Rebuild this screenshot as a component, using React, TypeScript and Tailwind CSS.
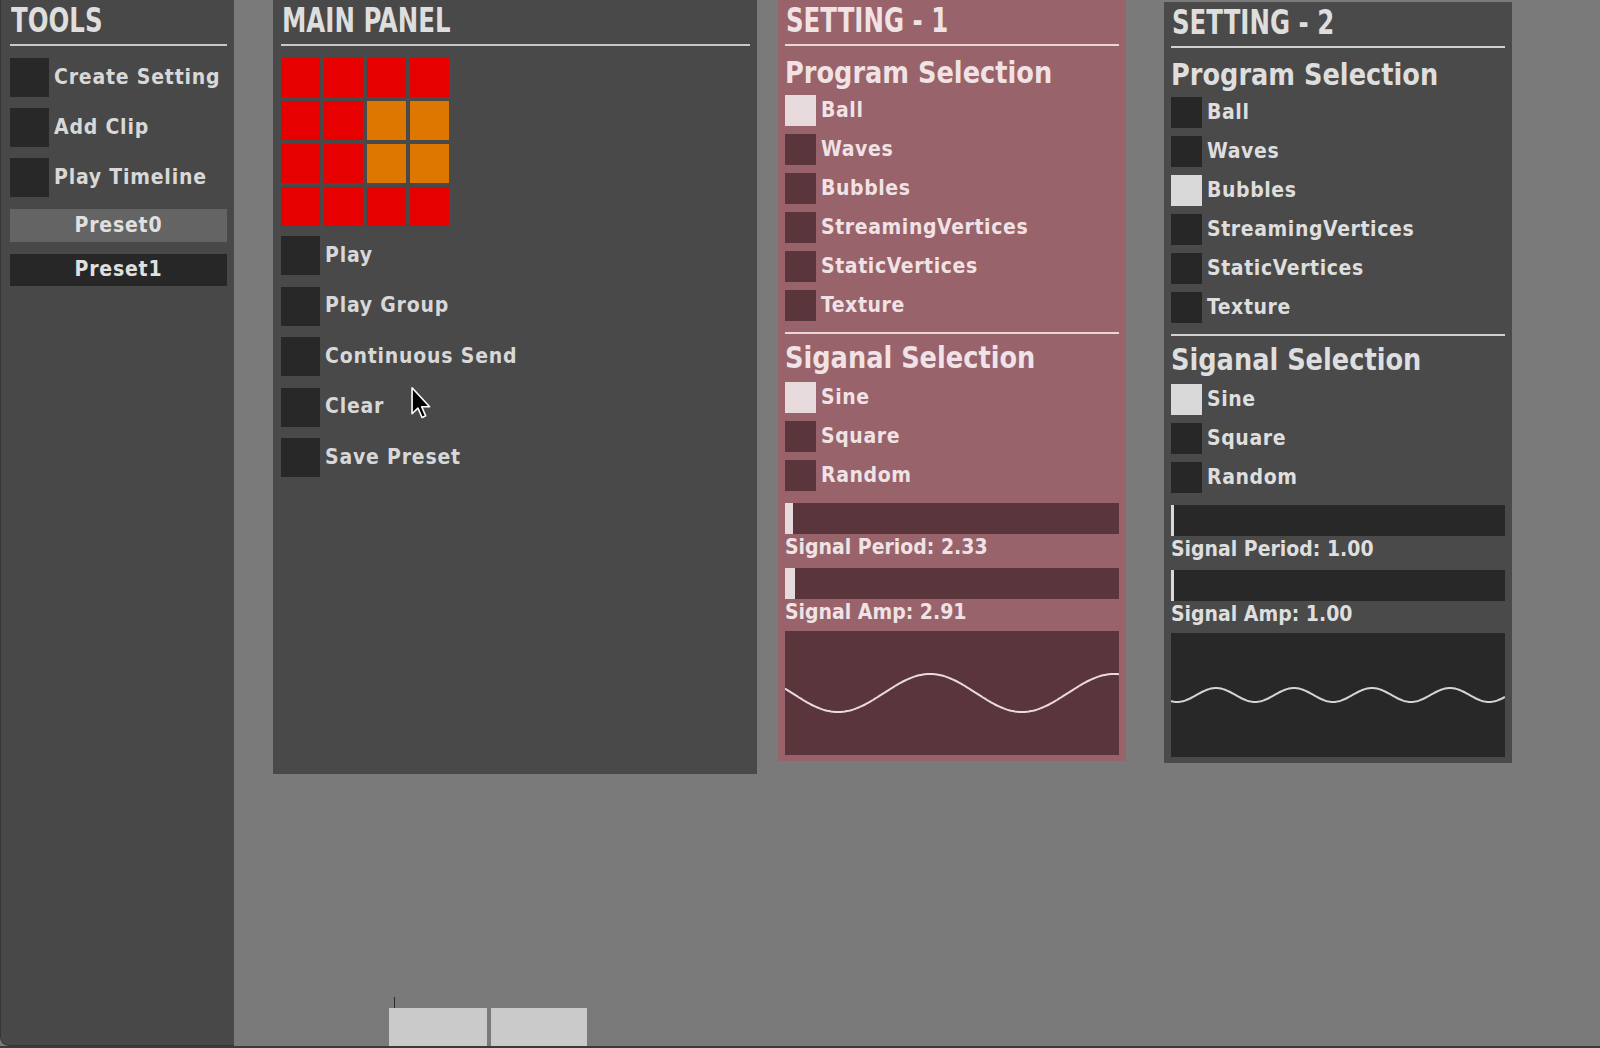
import React from "react";

const FONT =
  "font-['DejaVu_Sans_Condensed','DejaVu_Sans',sans-serif] [font-stretch:condensed] font-bold";

type Theme = {
  panel: string;
  off: string;
  on: string;
  text: string;
  line: string;
  track: string;
  handle: string;
  stroke: string;
};

const ROSE: Theme = {
  panel: "bg-[#98636a]",
  off: "bg-[#5a353b]",
  on: "bg-[#e6dadd]",
  text: "text-[#f0e2e5]",
  line: "bg-[#ead6da]",
  track: "bg-[#5a363c]",
  handle: "bg-[#e6dadd]",
  stroke: "#eadadd",
};

const GREY: Theme = {
  panel: "bg-[#4a4a4a]",
  off: "bg-[#272727]",
  on: "bg-[#d9d9d9]",
  text: "text-[#dedede]",
  line: "bg-[#d0d0d0]",
  track: "bg-[#282828]",
  handle: "bg-[#d9d9d9]",
  stroke: "#d4d4d4",
};

const PROGRAMS = ["Ball", "Waves", "Bubbles", "StreamingVertices", "StaticVertices", "Texture"];
const SIGNALS = ["Sine", "Square", "Random"];

// orange cells in the 4x4 pad grid
const HOT = new Set([6, 7, 10, 11]);

function wavePath(w: number, cy: number, amp: number, period: number, peak: number) {
  const pts: string[] = [];
  for (let x = 0; x <= w; x += 2) {
    const y = cy - amp * Math.cos((2 * Math.PI * (x - peak)) / period);
    pts.push(`${x},${y.toFixed(1)}`);
  }
  return "M" + pts.join(" L");
}

function Header({ title, text, line }: { title: string; text: string; line: string }) {
  return (
    <>
      <div className={`h-[44px] text-[34px] leading-[41px] pl-[1px] whitespace-nowrap ${text}`}>
        <span className="inline-block origin-left scale-x-[0.8]">{title}</span>
      </div>
      <div className={`h-[2px] ${line}`} />
    </>
  );
}

function BigToggle({ label }: { label: string }) {
  return (
    <div className="flex items-center h-[39px] gap-[5px]">
      <div className="w-[39px] h-[39px] bg-[#282828] shrink-0" />
      <span className="text-[21px] tracking-[0.8px] text-[#d8d8d8]">{label}</span>
    </div>
  );
}

function SmallToggle({ label, on, t }: { label: string; on: boolean; t: Theme }) {
  return (
    <div className="flex items-center h-[31px] gap-[5px]">
      <div className={`w-[31px] h-[31px] shrink-0 ${on ? t.on : t.off}`} />
      <span className={`text-[21px] tracking-[0.6px] ${t.text}`}>{label}</span>
    </div>
  );
}

function Slider({ fill, t }: { fill: number; t: Theme }) {
  return (
    <div className={`h-[31px] ${t.track} flex`}>
      <div className={`h-full ${t.handle}`} style={{ width: fill }} />
    </div>
  );
}

function SettingPanel({
  title,
  t,
  program,
  signal,
  period,
  amp,
  fills,
  wave,
  extraClass,
}: {
  title: string;
  t: Theme;
  program: number;
  signal: number;
  period: string;
  amp: string;
  fills: [number, number];
  wave: { amp: number; period: number; peak: number };
  extraClass: string;
}) {
  const d = wavePath(334, 62, wave.amp, wave.period, wave.peak);
  return (
    <div className={`w-[348px] h-[761px] px-[7px] ${t.panel} ${extraClass}`}>
      <Header title={title} text={t.text} line={t.line} />
      <div className={`h-[49px] text-[30px] leading-[54px] whitespace-nowrap ${t.text}`}>
        <span className="inline-block origin-left scale-x-[0.95]">Program Selection</span>
      </div>
      <div className="flex flex-col gap-[8px]">
        {PROGRAMS.map((p, i) => (
          <SmallToggle key={p} label={p} on={i === program} t={t} />
        ))}
      </div>
      <div className={`h-[2px] mt-[11px] ${t.line}`} />
      <div className={`h-[48px] text-[30px] leading-[48px] whitespace-nowrap ${t.text}`}>
        <span className="inline-block origin-left scale-x-[0.95]">Siganal Selection</span>
      </div>
      <div className="flex flex-col gap-[8px]">
        {SIGNALS.map((s, i) => (
          <SmallToggle key={s} label={s} on={i === signal} t={t} />
        ))}
      </div>
      <div className="mt-[12px]">
        <Slider fill={fills[0]} t={t} />
      </div>
      <div className={`h-[34px] text-[21px] leading-[26px] ${t.text}`}>Signal Period: {period}</div>
      <Slider fill={fills[1]} t={t} />
      <div className={`h-[32px] text-[21px] leading-[26px] ${t.text}`}>Signal Amp: {amp}</div>
      <div className={`h-[124px] ${t.track}`}>
        <svg width="100%" height="124" viewBox="0 0 334 124" preserveAspectRatio="none">
          <path d={d} fill="none" stroke={t.stroke} strokeWidth="2" />
        </svg>
      </div>
    </div>
  );
}

function Cursor() {
  return (
    <svg
      className="absolute left-[410px] top-[386px]"
      width="22"
      height="34"
      viewBox="0 0 12 19"
    >
      <path
        d="M1 1 L1 15.5 L4.3 12.4 L6.6 17.6 L8.6 16.7 L6.4 11.6 L10.8 11.6 Z"
        fill="#000"
        stroke="#fff"
        strokeWidth="0.9"
        strokeLinejoin="round"
      />
    </svg>
  );
}

export default function App() {
  return (
    <div className={`relative w-[1600px] h-[1048px] overflow-hidden bg-[#7a7a7a] ${FONT}`}>
      <div className="flex items-start">
        {/* tools column */}
        <div className="w-[234px] h-[1046px] bg-[#484848] border-l border-b border-[#353535] rounded-bl-[9px] pl-[9px] pr-[7px] shrink-0">
          <Header title="TOOLS" text="text-[#dedede]" line="bg-[#c8c8c8]" />
          <div className="mt-[12px] flex flex-col gap-[11px]">
            <BigToggle label="Create Setting" />
            <BigToggle label="Add Clip" />
            <BigToggle label="Play Timeline" />
          </div>
          <div className="mt-[12px] h-[33px] bg-[#646464] flex items-center justify-center text-[21px] tracking-[0.8px] text-[#e0e0e0]">
            Preset0
          </div>
          <div className="mt-[12px] h-[32px] bg-[#272727] flex items-center justify-center text-[21px] tracking-[0.8px] text-[#e0e0e0]">
            Preset1
          </div>
        </div>

        {/* main panel */}
        <div className="ml-[39px] w-[484px] h-[774px] bg-[#494949] pl-[8px] pr-[7px] shrink-0">
          <Header title="MAIN PANEL" text="text-[#dedede]" line="bg-[#c8c8c8]" />
          <div className="mt-[12px] grid grid-cols-[repeat(4,39px)] gap-[4px] w-fit">
            {Array.from({ length: 16 }).map((_, i) => (
              <div
                key={i}
                className={`w-[39px] h-[39px] ${HOT.has(i) ? "bg-[#dd7700]" : "bg-[#e60000]"}`}
              />
            ))}
          </div>
          <div className="mt-[10px] flex flex-col gap-[11.5px]">
            <BigToggle label="Play" />
            <BigToggle label="Play Group" />
            <BigToggle label="Continuous Send" />
            <BigToggle label="Clear" />
            <BigToggle label="Save Preset" />
          </div>
        </div>

        <SettingPanel
          title="SETTING - 1"
          t={ROSE}
          program={0}
          signal={0}
          period="2.33"
          amp="2.91"
          fills={[8, 10]}
          wave={{ amp: 19, period: 184, peak: 145 }}
          extraClass="ml-[21px] shrink-0"
        />

        <SettingPanel
          title="SETTING - 2"
          t={GREY}
          program={2}
          signal={0}
          period="1.00"
          amp="1.00"
          fills={[3, 3]}
          wave={{ amp: 7, period: 78, peak: 45 }}
          extraClass="ml-[38px] mt-[2px] shrink-0"
        />
      </div>

      {/* timeline stubs along the bottom edge */}
      <div className="absolute left-[394px] top-[997px] w-[1px] h-[51px] bg-[#2c2c2c]" />
      <div className="absolute left-[389px] top-[1008px] w-[98px] h-[40px] bg-[#cacaca]" />
      <div className="absolute left-[491px] top-[1008px] w-[96px] h-[40px] bg-[#cacaca]" />
      <div className="absolute left-0 top-[1046px] w-[1600px] h-[2px] bg-[#3a3a3a]" />

      <Cursor />
    </div>
  );
}
